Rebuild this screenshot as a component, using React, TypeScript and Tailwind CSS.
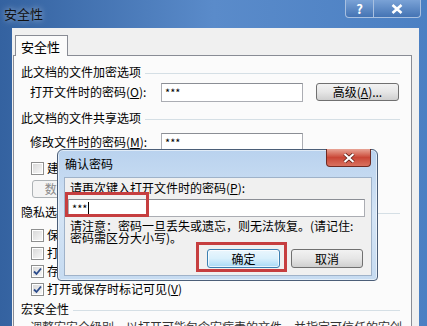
import React from 'react';

const font = { fontFamily: '"Noto Sans CJK SC", "Noto Sans", sans-serif' };

// Win7 style checkbox
function Check({ checked }: { checked?: boolean }) {
  return (
    <span className="flex h-[13px] w-[13px] shrink-0 items-center justify-center border border-[#8e8f8f] bg-white p-px">
      <span className="flex h-full w-full items-center justify-center bg-gradient-to-br from-[#d9d9d9] to-[#f7f7f7]">
        {checked && (
          <svg width="9" height="9" viewBox="0 0 9 9">
            <path d="M1 4.5 L3.5 7 L8 1.5" fill="none" stroke="#2c4c8c" strokeWidth="1.8" />
          </svg>
        )}
      </span>
    </span>
  );
}

function Header({ title }: { title: string }) {
  return (
    <div className="flex h-[20px] items-center pl-[7px] pr-[11px]">
      <span>{title}</span>
      <span className="ml-[4px] mt-[3px] h-px flex-1 bg-[#d5dfe5]" />
    </div>
  );
}

function CheckRow({ label, checked }: { label: React.ReactNode; checked?: boolean }) {
  return (
    <div className="flex h-[18px] items-center gap-[3px] pl-[17px]">
      <Check checked={checked} />
      <span>{label}</span>
    </div>
  );
}

const u = (c: string) => <span className="underline">{c}</span>;

export default function App() {
  return (
    <div
      className="relative h-[326px] w-[427px] overflow-hidden bg-gradient-to-r from-[#3462a0] via-[#5a8bca] to-[#4b80c3] text-[12px] leading-none text-black"
      style={font}
    >
      {/* Title bar */}
      <div className="flex h-[28px] items-start justify-between">
        <span className="pl-[4px] pt-[7px] text-[13px] text-[#111] [text-shadow:0_0_6px_rgba(255,255,255,0.7)]">
          安全性
        </span>
        <div className="mr-[6px] flex">
          <div className="flex h-[18px] w-[29px] items-center justify-center rounded-bl-[4px] border border-t-0 border-[#a8c0e0] bg-gradient-to-b from-[#7aa2d6] to-[#4474b4] text-[13px] font-bold text-white">
            ?
          </div>
          <div className="flex h-[18px] w-[47px] items-center justify-center rounded-br-[4px] border border-l-0 border-t-0 border-[#a8c0e0] bg-gradient-to-b from-[#7aa2d6] to-[#4474b4]">
            <svg width="12" height="10" viewBox="0 0 12 10">
              <path d="M1.5 1 L10.5 9 M10.5 1 L1.5 9" stroke="#fff" strokeWidth="2.6" />
            </svg>
          </div>
        </div>
      </div>

      {/* Client area */}
      <div className="ml-[12px] mr-[8px] h-[300px] bg-[#f0f0f0] pl-px pr-[7px] pt-[7px]">
        <div className="relative z-10 -mb-px ml-[2px] flex h-[21px] w-[53px] items-center border border-b-0 border-[#898c95] bg-[#fbfbfb] pl-[5px] text-[13px]">
          安全性
        </div>
        <div className="h-[300px] border border-[#898c95] bg-[#fbfbfb] pt-[6px]">
          <Header title="此文档的文件加密选项" />
          <div className="flex h-[20px] items-center pl-[16px]">
            <span className="w-[131px]">打开文件时的密码({u('O')}):</span>
            <div className="flex h-[19px] w-[142px] items-center border border-[#abadb3] border-t-[#8b8e95] bg-white pl-[3px] text-[11px]">
              ***
            </div>
            <div className="ml-[13px] flex h-[18px] w-[83px] items-center justify-center rounded-[3px] border border-[#707070] bg-gradient-to-b from-[#f2f2f2] via-[#e6e6e6] to-[#cfcfcf]">
              高级({u('A')})...
            </div>
          </div>
          <div className="mt-[6px]">
            <Header title="此文档的文件共享选项" />
          </div>
          <div className="mt-[4px] flex h-[20px] items-center pl-[16px]">
            <span className="w-[131px]">修改文件时的密码({u('M')}):</span>
            <div className="flex h-[19px] w-[142px] items-center border border-[#abadb3] border-t-[#8b8e95] bg-white pl-[3px] text-[11px]">
              ***
            </div>
          </div>
          <div className="mt-[6px] flex h-[20px] items-center gap-[3px] pl-[17px]">
            <Check />
            <span>建议以只读方式打开文档({u('E')})</span>
          </div>
          <div className="mt-[2px] pl-[18px]">
            <div className="flex h-[18px] w-[100px] items-center justify-center rounded-[3px] border border-[#adb2b5] bg-[#f4f4f4] text-[#8a8a8a]">
              数字签名({u('D')})...
            </div>
          </div>
          <div className="mt-[4px]">
            <Header title="隐私选项" />
          </div>
          <div className="mt-[4px]">
            <CheckRow label={<>保存时从文件属性中删除个人信息({u('R')})</>} />
            <CheckRow label={<>打印、保存或发送包含修订或批注的文件之前给出警告({u('W')})</>} />
            <CheckRow checked label={<>存储用于增强合并精确性的随机编号({u('N')})</>} />
            <CheckRow checked label={<>打开或保存时标记可见({u('V')})</>} />
          </div>
          <div className="mt-[1px]">
            <Header title="宏安全性" />
          </div>
          <div className="mt-[5px] flex h-[18px] items-center pl-[16px] text-[#333]">
            调整宏安全级别，以打开可能包含宏病毒的文件，并指定可信任的宏创建者姓名。
          </div>
        </div>
      </div>

      {/* Confirm password dialog */}
      <div className="absolute left-[57px] top-[149px] flex h-[132px] w-[321px] flex-col rounded-t-[6px] rounded-b-[4px] border border-[#4b5e78] bg-gradient-to-b from-[#b9d2ee] via-[#d4e4f5] to-[#c6dbf1] shadow-[inset_0_0_0_1px_rgba(255,255,255,0.55)]">
        <div className="relative flex h-[27px] items-center pl-[7px] pt-[1px] text-[12px]">
          确认密码
          <div className="absolute left-[268px] top-[-1px] flex h-[18px] w-[45px] items-center justify-center rounded-b-[4px] border border-t-0 border-[#6f2a22] bg-gradient-to-b from-[#e8a496] via-[#c94636] to-[#d9715f]">
            <svg width="12" height="10" viewBox="0 0 12 10">
              <path d="M1.5 1 L10.5 9 M10.5 1 L1.5 9" stroke="#5a1a12" strokeWidth="3.6" />
              <path d="M1.5 1 L10.5 9 M10.5 1 L1.5 9" stroke="#fff" strokeWidth="2.2" />
            </svg>
          </div>
        </div>
        <div className="mb-[4px] ml-[6px] mr-[5px] flex-1 border border-[#9fb2c9] bg-[#f0f0f0]">
          <div className="flex h-[20px] items-center pl-[5px]">
            请再次键入打开文件时的密码({u('P')}):
          </div>
          <div className="ml-[3px] mt-px flex h-[18px] w-[297px] items-center border border-[#abadb3] border-t-[#8b8e95] bg-white pl-[3px] text-[11px]">
            ***<span className="ml-px h-[12px] w-px bg-black" />
          </div>
          <div className="mt-[3px] pl-[5px] leading-[12px]">
            <div>请注意：密码一旦丢失或遗忘，则无法恢复。(请记住:</div>
            <div>密码需区分大小写)。</div>
          </div>
          <div className="mt-[5px] flex justify-end gap-[11px] pr-[8px]">
            <div className="flex h-[19px] w-[73px] items-center justify-center rounded-[3px] border border-[#3c7fb1] bg-gradient-to-b from-[#eaf6fd] via-[#d9f0fc] to-[#a7d9f5] shadow-[inset_0_0_0_1px_rgba(255,255,255,0.7)]">
              确定
            </div>
            <div className="flex h-[19px] w-[72px] items-center justify-center rounded-[3px] border border-[#707070] bg-gradient-to-b from-[#f2f2f2] via-[#e6e6e6] to-[#cfcfcf]">
              取消
            </div>
          </div>
        </div>
      </div>

      {/* Red highlight boxes */}
      <div className="absolute left-[65px] top-[192px] h-[25px] w-[84px] border-[3px] border-[#c63e3f]" />
      <div className="absolute left-[196px] top-[242px] h-[30px] w-[91px] border-[3px] border-[#c63e3f]" />
    </div>
  );
}
